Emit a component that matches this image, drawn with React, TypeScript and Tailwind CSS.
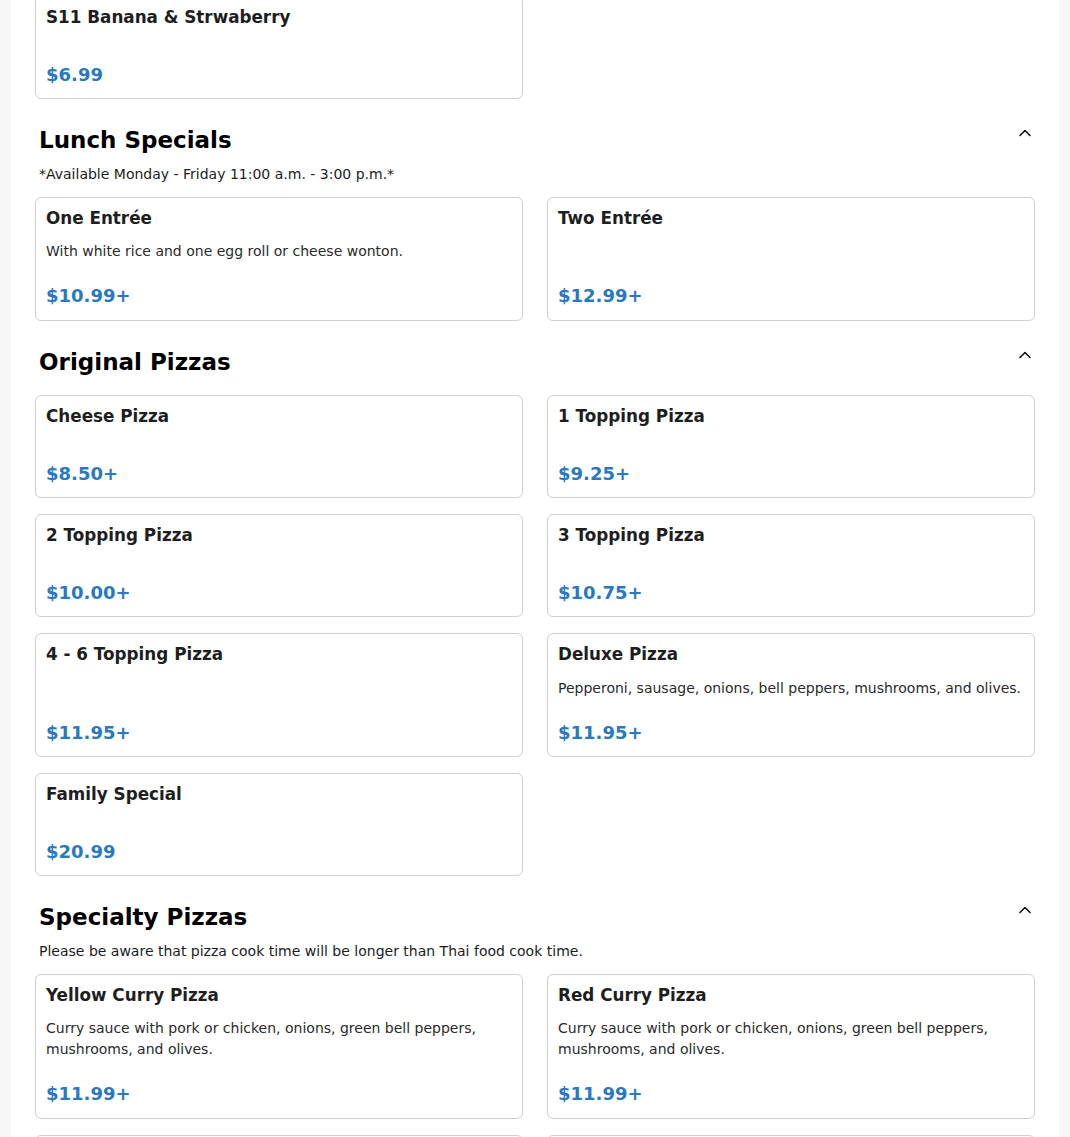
import React from 'react';

interface MenuItem {
  name: string;
  description?: string;
  price: string;
}

interface Section {
  title: string;
  note?: string;
  items: MenuItem[];
}

const sections: Section[] = [
  {
    title: 'Lunch Specials',
    note: '*Available Monday - Friday 11:00 a.m. - 3:00 p.m.*',
    items: [
      { name: 'One Entrée', description: 'With white rice and one egg roll or cheese wonton.', price: '$10.99+' },
      { name: 'Two Entrée', price: '$12.99+' },
    ],
  },
  {
    title: 'Original Pizzas',
    items: [
      { name: 'Cheese Pizza', price: '$8.50+' },
      { name: '1 Topping Pizza', price: '$9.25+' },
      { name: '2 Topping Pizza', price: '$10.00+' },
      { name: '3 Topping Pizza', price: '$10.75+' },
      { name: '4 - 6 Topping Pizza', price: '$11.95+' },
      { name: 'Deluxe Pizza', description: 'Pepperoni, sausage, onions, bell peppers, mushrooms, and olives.', price: '$11.95+' },
      { name: 'Family Special', price: '$20.99' },
    ],
  },
  {
    title: 'Specialty Pizzas',
    note: 'Please be aware that pizza cook time will be longer than Thai food cook time.',
    items: [
      { name: 'Yellow Curry Pizza', description: 'Curry sauce with pork or chicken, onions, green bell peppers, mushrooms, and olives.', price: '$11.99+' },
      { name: 'Red Curry Pizza', description: 'Curry sauce with pork or chicken, onions, green bell peppers, mushrooms, and olives.', price: '$11.99+' },
      { name: 'Green Curry Pizza', description: 'Curry sauce with pork or chicken, onions, green bell peppers, mushrooms, and olives.', price: '$11.99+' },
      { name: 'Thai Chicken Pizza', description: 'Peanut sauce with chicken, onions, carrots, and bean sprouts.', price: '$11.99+' },
    ],
  },
];

const ItemCard: React.FC<{ item: MenuItem }> = ({ item }) => (
  <div className="flex flex-col border border-[#cfcfcf] rounded-[6px] bg-white pt-[8px] pb-[10.5px] px-[10px]">
    <h3 className="text-[16.8px] leading-[25.5px] font-bold text-[#1e1e1e] mb-[10px]">{item.name}</h3>
    <p className="text-[14px] leading-[21px] text-[#2a2a2a] mb-[20px]">{item.description}</p>
    <div className="mt-auto text-[18px] leading-[27px] font-bold text-[#2878c2]">{item.price}</div>
  </div>
);

const ChevronUp = () => (
  <svg width="16" height="16" viewBox="0 0 16 16" fill="none" className="mt-[2px] shrink-0">
    <polyline points="3,10.5 8,5.5 13,10.5" stroke="#111" strokeWidth="1.6" strokeLinecap="round" strokeLinejoin="round" />
  </svg>
);

export default function App() {
  return (
    <div className="min-h-screen bg-[#f7f7f8] px-[11px] overflow-hidden" style={{ fontFamily: '"DejaVu Sans", sans-serif' }}>
      <div className="bg-white px-6 pb-10">
        {/* tail of the previous section */}
        <div className="grid grid-cols-2 gap-x-6 gap-y-4 -mt-[4px]">
          <ItemCard item={{ name: 'S11 Banana & Strwaberry', price: '$6.99' }} />
        </div>

        {sections.map((section) => (
          <div key={section.title} className="mt-6">
            <div className="flex items-start justify-between pl-1 pr-[2px] pb-[4px]">
              <h2 className="text-[23px] leading-[34.5px] font-bold text-black">{section.title}</h2>
              <ChevronUp />
            </div>
            {section.note && (
              <p className="pl-1 pt-[2px] text-[14px] leading-[21px] text-[#1c1c1c]">{section.note}</p>
            )}
            <div className="grid grid-cols-2 gap-x-6 gap-y-4 mt-3">
              {section.items.map((item) => (
                <ItemCard key={item.name} item={item} />
              ))}
            </div>
          </div>
        ))}
      </div>
    </div>
  );
}
